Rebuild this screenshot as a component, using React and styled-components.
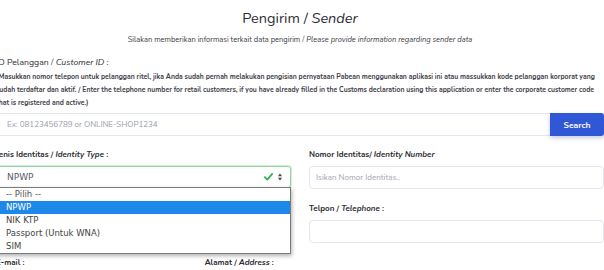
import React from "react";
import styled, { createGlobalStyle } from "styled-components";

const GlobalStyle = createGlobalStyle`
  html, body { margin: 0; padding: 0; background: #fff; }
  body {
    font-family: Nunito, Lato, "Open Sans", sans-serif;
    color: #3a3b45;
    overflow: hidden;
    width: 604px;
    height: 270px;
  }
  * { box-sizing: border-box; }
`;

const Page = styled.div`
  width: 608px;
  height: 270px;
  margin-left: -4px;
  overflow: hidden;
`;

const Header = styled.header`
  display: flex;
  flex-direction: column;
  align-items: center;
  padding-top: 9px;
`;

const Title = styled.h1`
  margin: 0;
  font-size: 14.5px;
  line-height: 18px;
  font-weight: 400;
  color: #2b2c33;
`;

const Subtitle = styled.p`
  margin: 8px 0 0;
  font-size: 7.5px;
  line-height: 10px;
  color: #3a3b45;
`;

const Section = styled.section`
  margin-top: 11px;
`;

const MainLabel = styled.div`
  font-size: 8.7px;
  line-height: 12px;
  color: #2b2c33;
`;

const Help = styled.p`
  margin: 1.5px 0 0;
  font-size: 6.85px;
  line-height: 13px;
  font-weight: 700;
  color: #3f4049;
  white-space: nowrap;
`;

const InputGroup = styled.div`
  display: flex;
  margin-top: 4.5px;
  height: 23px;
`;

const SearchInput = styled.div`
  flex: 1;
  border: 1px solid #e3e6f0;
  border-right: none;
  border-radius: 4px 0 0 4px;
  display: flex;
  align-items: center;
  padding-left: 10px;
  font-size: 8px;
  color: #9a9ca8;
`;

const SearchButton = styled.button`
  width: 54px;
  border: none;
  background: #2f57d6;
  color: #fff;
  font-family: inherit;
  font-weight: 700;
  font-size: 8.5px;
  border-radius: 0 3px 3px 0;
  box-shadow: 0 2px 4px rgba(30, 50, 120, 0.25);
  padding: 0;
`;

const Grid = styled.div`
  display: grid;
  grid-template-columns: repeat(${(p) => p.$cols}, 1fr);
  column-gap: 18px;
  margin-top: ${(p) => p.$top || 0}px;
`;

const Group = styled.div`
  display: flex;
  flex-direction: column;
  margin-bottom: 14px;
  position: relative;
`;

const Label = styled.label`
  font-size: 8px;
  line-height: 12px;
  font-weight: 700;
  color: #2b2c33;
  margin-bottom: 5px;
`;

const Input = styled.div`
  height: 23px;
  border: 1px solid #e3e6f0;
  border-radius: 4px;
  display: flex;
  align-items: center;
  padding-left: 6px;
  font-size: 8px;
  color: #a3a5ae;
`;

const SelectBox = styled.div`
  height: 22px;
  border: 1px solid #8fd6a2;
  border-radius: 3px;
  box-shadow: 0 0 0 1px rgba(120, 210, 140, 0.35);
  display: flex;
  align-items: center;
  padding: 0 8px 0 10px;
  font-family: "DejaVu Sans", sans-serif;
  font-size: 9px;
  color: #5a5c69;
  gap: 5px;
`;

const SelectValue = styled.span`
  flex: 1;
`;

const Dropdown = styled.ul`
  position: absolute;
  left: 0;
  right: 0;
  top: 38.5px;
  margin: 0;
  padding: 0;
  list-style: none;
  background: #fff;
  border: 1px solid #7a7a7a;
  box-shadow: 1px 2px 4px rgba(0, 0, 0, 0.3);
  z-index: 5;
  font-family: "DejaVu Sans", sans-serif;
  font-size: 8.5px;
`;

const Option = styled.li`
  height: 13px;
  line-height: 13px;
  padding-left: 9px;
  background: ${(p) => (p.$active ? "#1e88e8" : "transparent")};
  color: ${(p) => (p.$active ? "#fff" : p.$muted ? "#555" : "#444")};
`;

const Check = () => (
  <svg width="9" height="8" viewBox="0 0 9 8">
    <path d="M0.8 4.2 L3.3 6.7 L8.2 0.9" fill="none" stroke="#2fb457" strokeWidth="1.8" strokeLinecap="round" strokeLinejoin="round" />
  </svg>
);

const Sort = () => (
  <svg width="4" height="8" viewBox="0 0 4 8">
    <path d="M0 3.2 L2 0.6 L4 3.2 Z M0 4.8 L2 7.4 L4 4.8 Z" fill="#444" />
  </svg>
);

export default function App() {
  return (
    <>
      <GlobalStyle />
      <Page>
        <Header>
          <Title>
            Pengirim / <i>Sender</i>
          </Title>
          <Subtitle>
            Silakan memberikan informasi terkait data pengirim / <i>Please provide information regarding sender data</i>
          </Subtitle>
        </Header>

        <Section>
          <MainLabel>
            ID Pelanggan / <i>Customer ID</i> :
          </MainLabel>
          <Help>
            (Masukkan nomor telepon untuk pelanggan ritel, jika Anda sudah pernah melakukan pengisian pernyataan Pabean menggunakan aplikasi ini atau massukkan kode pelanggan korporat yang
            <br />
            sudah terdaftar dan aktif. / Enter the telephone number for retail customers, if you have already filled in the Customs declaration using this application or enter the corporate customer code
            <br />
            that is registered and active.)
          </Help>
          <InputGroup>
            <SearchInput>Ex: 08123456789 or ONLINE-SHOP1234</SearchInput>
            <SearchButton>Search</SearchButton>
          </InputGroup>
        </Section>

        <Grid $cols={2} $top={12.5}>
          <div>
            <Group>
              <Label>
                Jenis Identitas / <i>Identity Type</i> :
              </Label>
              <SelectBox>
                <SelectValue>NPWP</SelectValue>
                <Check />
                <Sort />
              </SelectBox>
              <Dropdown>
                <Option $muted>-- Pilih --</Option>
                <Option $active>NPWP</Option>
                <Option>NIK KTP</Option>
                <Option>Passport (Untuk WNA)</Option>
                <Option>SIM</Option>
              </Dropdown>
            </Group>
          </div>
          <div>
            <Group>
              <Label>
                Nomor Identitas/ <i>Identity Number</i>
              </Label>
              <Input>Isikan Nomor Identitas..</Input>
            </Group>
            <Group>
              <Label>
                Telpon / <i>Telephone</i> :
              </Label>
              <Input />
            </Group>
          </div>
        </Grid>

        <Grid $cols={3}>
          <Group>
            <Label>E-mail :</Label>
            <Input />
          </Group>
          <Group>
            <Label>
              Alamat / <i>Address</i> :
            </Label>
            <Input />
          </Group>
          <Group />
        </Grid>
      </Page>
    </>
  );
}
